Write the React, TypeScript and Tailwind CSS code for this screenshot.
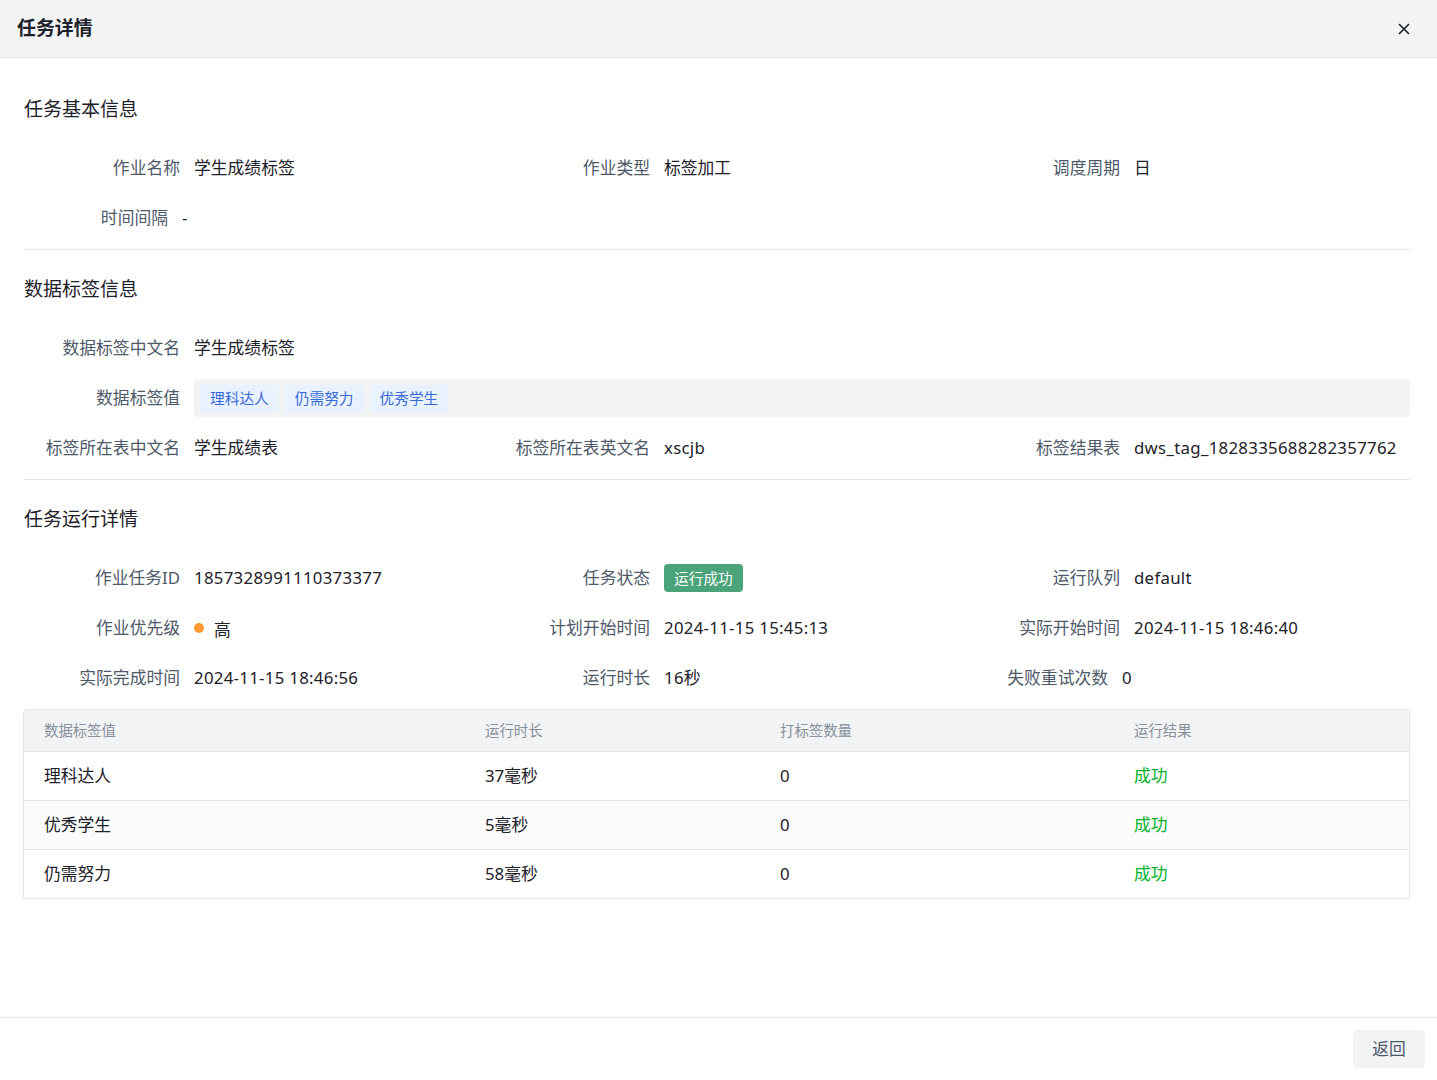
import React from 'react';

type Item = {
  label: string;
  value: React.ReactNode;
  narrow?: boolean;
  span?: boolean;
};

const font = { fontFamily: '"Noto Sans", "Noto Sans CJK SC", sans-serif' };

const Latin = ({ children }: { children: React.ReactNode }) => (
  <span className="tracking-[0.3px]">{children}</span>
);

const Field = ({ item }: { item: Item }) => (
  <div className={`flex items-center h-[50px] ${item.span ? 'col-span-3' : ''}`}>
    <div
      className={`${item.narrow ? 'w-[144px]' : 'w-[156px]'} shrink-0 text-right text-[16.8px] text-[#4e5969] whitespace-nowrap`}
    >
      {item.label}
    </div>
    <div className="pl-[14px] flex-1 min-w-0 text-[16.8px] text-[#1d2129] whitespace-nowrap">
      {item.value}
    </div>
  </div>
);

const Section = ({ title, rows }: { title: string; rows: Item[][] }) => (
  <div>
    <div className="h-[40px] flex items-center text-[19px] text-[#1d2129]">{title}</div>
    <div className="mt-[14px]">
      {rows.map((row, i) => (
        <div key={i} className="grid grid-cols-[470px_470px_1fr]">
          {row.map((item) => (
            <Field key={item.label} item={item} />
          ))}
        </div>
      ))}
    </div>
  </div>
);

const Divider = () => <div className="h-px bg-[#e5e6eb] mt-[6px] mb-[19px]" />;

const tags = ['理科达人', '仍需努力', '优秀学生'];

const TagBox = () => (
  <div className="h-[38px] bg-[#f2f3f5] rounded-[4px] flex items-center gap-[6px] px-[6px]">
    {tags.map((t) => (
      <span
        key={t}
        className="h-[27px] px-[10px] flex items-center rounded-[4px] bg-[#e8f3ff] text-[#3a68d6] text-[14.7px]"
      >
        {t}
      </span>
    ))}
  </div>
);

const results = [
  { name: '理科达人', time: '37毫秒', count: '0', result: '成功' },
  { name: '优秀学生', time: '5毫秒', count: '0', result: '成功' },
  { name: '仍需努力', time: '58毫秒', count: '0', result: '成功' },
];

const ResultTable = () => (
  <div className="mt-[6px] ml-[-1px] border border-[#e5e6eb] rounded-t-[4px] overflow-hidden">
    <div className="grid grid-cols-[441px_295px_354px_1fr] h-[41px] items-center bg-[#f2f3f5] text-[14.4px] text-[#86909c]">
      <div className="pl-5">数据标签值</div>
      <div className="pl-5">运行时长</div>
      <div className="pl-5">打标签数量</div>
      <div className="pl-5">运行结果</div>
    </div>
    {results.map((r, i) => (
      <div
        key={r.name}
        className={`grid grid-cols-[441px_295px_354px_1fr] h-[49px] items-center border-t border-[#e5e6eb] text-[16.8px] text-[#1d2129] ${
          i === 1 ? 'bg-[#fbfbfc]' : 'bg-white'
        }`}
      >
        <div className="pl-5">{r.name}</div>
        <div className="pl-5">{r.time}</div>
        <div className="pl-5">{r.count}</div>
        <div className="pl-5 text-[#00b42a]">{r.result}</div>
      </div>
    ))}
  </div>
);

export default function App() {
  return (
    <div className="h-screen flex flex-col bg-white" style={font}>
      <div className="h-[58px] shrink-0 flex items-center justify-between bg-[#f2f3f5] border-b border-[#e5e6eb] pl-[17px] pr-[27px]">
        <h1 className="text-[18.9px] font-bold text-[#1d2129]">任务详情</h1>
        <button className="w-[12px] h-[12px] flex items-center justify-center text-[#1d2129]">
          <svg width="12" height="12" viewBox="0 0 12 12" fill="none" stroke="currentColor" strokeWidth="1.6">
            <path d="M1 1L11 11M11 1L1 11" />
          </svg>
        </button>
      </div>

      <div className="flex-1 pt-[31px] pl-6 pr-[27px]">
        <Section
          title="任务基本信息"
          rows={[
            [
              { label: '作业名称', value: '学生成绩标签' },
              { label: '作业类型', value: '标签加工' },
              { label: '调度周期', value: '日' },
            ],
            [{ label: '时间间隔', value: '-', narrow: true }],
          ]}
        />
        <Divider />
        <Section
          title="数据标签信息"
          rows={[
            [{ label: '数据标签中文名', value: '学生成绩标签' }],
            [{ label: '数据标签值', value: <TagBox />, span: true }],
            [
              { label: '标签所在表中文名', value: '学生成绩表' },
              { label: '标签所在表英文名', value: <Latin>xscjb</Latin> },
              { label: '标签结果表', value: <Latin>dws_tag_1828335688282357762</Latin> },
            ],
          ]}
        />
        <Divider />
        <Section
          title="任务运行详情"
          rows={[
            [
              { label: '作业任务ID', value: <Latin>1857328991110373377</Latin> },
              {
                label: '任务状态',
                value: (
                  <span className="inline-flex h-[28px] items-center px-[10px] rounded-[4px] bg-[#4ba37a] text-white text-[14.7px]">
                    运行成功
                  </span>
                ),
              },
              { label: '运行队列', value: <Latin>default</Latin> },
            ],
            [
              {
                label: '作业优先级',
                value: (
                  <span className="flex items-center">
                    <span className="w-[10px] h-[10px] rounded-full bg-[#ff9a2e]" />
                    <span className="ml-[10px] pt-[3px]">高</span>
                  </span>
                ),
              },
              { label: '计划开始时间', value: <Latin>2024-11-15 15:45:13</Latin> },
              { label: '实际开始时间', value: <Latin>2024-11-15 18:46:40</Latin> },
            ],
            [
              { label: '实际完成时间', value: <Latin>2024-11-15 18:46:56</Latin> },
              { label: '运行时长', value: <><Latin>16</Latin>秒</> },
              { label: '失败重试次数', value: '0', narrow: true },
            ],
          ]}
        />
        <ResultTable />
      </div>

      <div className="h-[63px] shrink-0 border-t border-[#e5e6eb] flex items-center justify-end pr-[12px] pb-[1px]">
        <button className="w-[72px] h-[38px] rounded-[4px] bg-[#f2f3f5] text-[16.8px] text-[#4e5969]">返回</button>
      </div>
    </div>
  );
}
